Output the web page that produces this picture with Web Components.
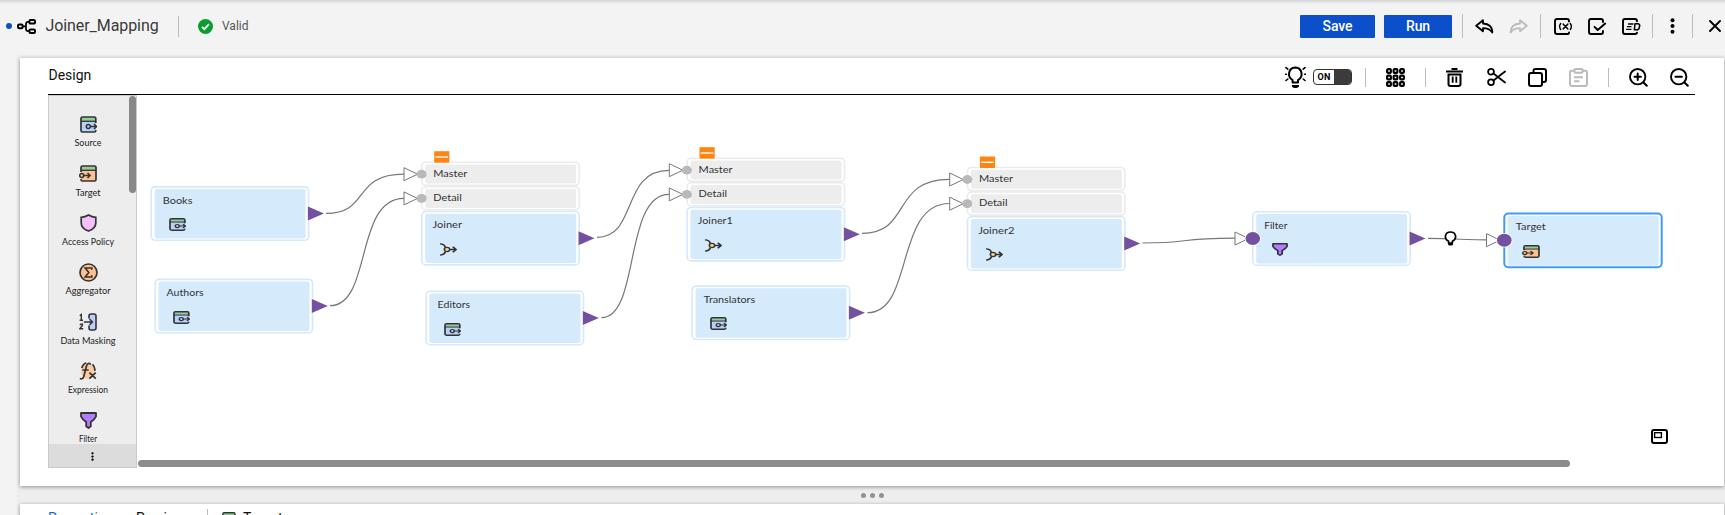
<!DOCTYPE html>
<html lang="en">
<head>
<meta charset="utf-8">
<title>Joiner_Mapping</title>
<style>
html,body{margin:0;height:100%;overflow:hidden;background:#f3f3f3;font-family:Roboto,sans-serif}
</style>
</head>
<body>
<mapping-app></mapping-app>
<script>
const P0 = 'fill="none" stroke="#000" stroke-linecap="round" stroke-linejoin="round"';
const S = P0 + ' stroke-width="2"';
const srcArt = (fill) => `<rect x="1" y="1" width="15" height="15" rx="1.6" fill="${fill}"/><path d="M1.5 1.5h14v3.7h-14z" fill="#8fd09a"/>`;
const ICONS = {
  mapping: [19,15,`<g fill="none" stroke="#000" stroke-width="2"><rect x="1" y="5.6" width="4.6" height="3.6" rx="1.2"/><rect x="12.4" y="1" width="5.6" height="3.6" rx="1.2"/><rect x="12.4" y="10.4" width="5.6" height="3.6" rx="1.2"/><path d="M5.6 7.4h3.2M12.4 2.8h-1.2q-2.2 0-2.2 2.2v5q0 2.2 2.2 2.2h1.2" stroke-width="1.7"/></g>`],
  valid: [15,15,`<circle cx="7.5" cy="7.5" r="7.5" fill="#0a9e2f"/><path d="M4 7.8l2.4 2.4 4.6-5" fill="none" stroke="#fff" stroke-width="1.8"/>`],
  undo: [19,15,`<path d="M8 1.2L1.2 6.8 8 12.2V9.2c4.600 0 7 .6 9.300 4.300C17.600 8 14 4.700 8 4.500z" ${P0} stroke-width="1.800"/>`],
  redo: [19,15,`<path d="M11 1.200l6.800 5.600L11 12.200V9.200c-4.600 0-7 .6-9.300 4.300C1.400 8 5 4.700 11 4.500z" fill="none" stroke="#bbb" stroke-width="1.800" stroke-linejoin="round"/>`],
  params: [19,17,`<path d="M15 3.500V3q0-2-2-2H3Q1 1 1 3v11q0 2 2 2h10q2 0 2-1.600" ${P0} stroke-width="1.900"/><path d="M6.700 5.500q-2.200 3 0 6M16.300 5.500q2.200 3 0 6" ${P0} stroke-width="1.400"/><path d="M9.300 6.200l4.400 4.600M13.700 6.200l-4.400 4.600" ${P0} stroke-width="1.600"/>`],
  check: [19,17,`<path d="M15 4V3q0-2-2-2H3Q1 1 1 3v11q0 2 2 2h10q2 0 2-2v-1M6.500 8.800l3.200 3.200 7.500-6.500" ${P0} stroke-width="1.900"/>`],
  script: [19,17,`<path d="M15 3.300V3q0-2-2-2H3Q1 1 1 3v11q0 2 2 2h10q2 0 2-1.400" ${P0} stroke-width="1.900"/><path d="M6.500 6h4.500M5.500 8.700h3.500M4.500 11.300h4.500" ${P0} stroke-width="1.300"/><path d="M13 5.800h3.500l1.300 1.500-.8 3.300-1.200 1.200h-3.500z" ${P0} stroke-width="1.500"/>`],
  dots: [5,16,`<circle cx="2.500" cy="2.300" r="2"/><circle cx="2.500" cy="8" r="2"/><circle cx="2.500" cy="13.700" r="2"/>`],
  close: [12,12,`<path d="M1 1l10 10M11 1L1 11" ${P0} stroke-width="1.900"/>`],
  bulb: [21,22,`<path d="M7.600 16.500v-2.300C1.700 10.500 3.500 1.600 10.300 1.400c6.800.2 8.600 9.100 2.700 12.800v2.300z" ${P0} stroke-width="2"/><path d="M7 19h7v1.600q-1 1.400-2.500 1.400h-2Q7.500 22 7 20.600z"/><path d="M1 1.600l1.800 1.500M20 1.600l-1.800 1.500M.6 8.300h.8M20.400 8.300h-.8M1 14.500l1.800-1.500M20 14.500l-1.800-1.500" ${P0} stroke-width="1.600"/>`],
  grid: [19,19,[1.100,7.600,14.100].map(y=>[1.100,7.600,14.100].map(x=>`<rect x="${x}" y="${y}" width="3.800" height="3.800" rx="1" fill="none" stroke="#000" stroke-width="2.100"/>`).join('')).join('')],
  trash: [17,19,`<path d="M0 3.400h17M5.500 1h6" fill="none" stroke="#000" stroke-width="2"/><path d="M2.500 6.500V16q0 2 2 2h8q2 0 2-2V6.500z" fill="none" stroke="#000" stroke-width="2"/><path d="M6.700 8.500v6.200M10.300 8.500v6.200" stroke="#000" stroke-width="1.800"/>`],
  cut: [19,18,`<circle cx="4" cy="3.800" r="2.900" ${P0} stroke-width="1.800"/><circle cx="4" cy="14.200" r="2.900" ${P0} stroke-width="1.800"/><path d="M6.500 5.500L18 14.500M6.500 12.500L18 3.500" ${P0} stroke-width="1.800"/>`],
  copy: [19,19,`<rect x="1" y="5" width="13" height="13" rx="2" ${S}/><path d="M5.500 4V3q0-2 2-2H16q2 0 2 2v9q0 2-2 2h-1" ${S}/>`],
  paste: [19,19,`<g fill="none" stroke="#bbb" stroke-width="2"><path d="M5 2.800H3q-2 0-2 2V16q0 2 2 2h13q2 0 2-2V4.800q0-2-2-2h-2"/><rect x="5.500" y="1" width="8" height="3.700" rx="1"/><path d="M5 9.200h9M5 13.200h5.500"/></g>`],
  zin: [19,19,`<circle cx="8.700" cy="8.700" r="7.700" ${P0} stroke-width="1.900"/><path d="M14.500 14.500l3.300 3.300M5.500 8.700h6.400M8.700 5.500v6.400" ${S}/>`],
  zout: [19,19,`<circle cx="8.700" cy="8.700" r="7.700" ${P0} stroke-width="1.900"/><path d="M14.500 14.500l3.300 3.300M5.500 8.700h6.400" ${S}/>`],
  minimap: [17,15,`<rect x="1" y="1" width="15" height="13" rx="2" ${S}/><rect x="3.600" y="3.700" width="6.800" height="4.800" fill="none" stroke="#000" stroke-width="1.400"/>`],
  source: [17,17,`${srcArt('#b9d0fa')}<path d="M1 5.300h15" stroke="#333" stroke-width="1.300"/><path d="M15.800 7V2.500Q15.800 1 14.300 1H2.500Q1 1 1 2.500v12Q1 16 2.500 16h11.800q1.500 0 1.500-1.500V14" fill="none" stroke="#333" stroke-width="1.700"/><circle cx="8.300" cy="10.500" r="2" fill="none" stroke="#333" stroke-width="1.500"/><path d="M10.300 10.500h6M14 8l2.600 2.500L14 13" fill="none" stroke="#333" stroke-width="1.500"/>`],
  target: [18,17,`<g transform="translate(1)">${srcArt('#fbc193')}<path d="M1 5.300h15" stroke="#333" stroke-width="1.300"/><path d="M1 7V2.500Q1 1 2.500 1h12Q16 1 16 2.500v12q0 1.500-1.500 1.500h-12Q1 16 1 14.500V14" fill="none" stroke="#333" stroke-width="1.700"/><circle cx="1.700" cy="10.500" r="2" fill="#fbc193" stroke="#333" stroke-width="1.500"/><path d="M3.700 10.500h6.300M7.500 8l2.600 2.500L7.500 13" fill="none" stroke="#333" stroke-width="1.500"/></g>`],
  policy: [17,18,`<path d="M8.500 1Q5 3.300 1.200 3.300V9q0 5.500 7.300 8 7.300-2.500 7.300-8V3.300Q12 3.300 8.500 1z" fill="#f3c0fb" stroke="#333" stroke-width="1.700"/>`],
  aggregator: [19,19,`<circle cx="9.500" cy="9.500" r="8.500" fill="#fbc193" stroke="#333" stroke-width="1.700"/><path d="M12.800 6.800V5H6.200l3.600 4.500L6.200 14h6.600v-1.800" fill="none" stroke="#333" stroke-width="1.600"/>`],
  masking: [18,18,`<path d="M10 5.500V3q0-2 2-2h3q2 0 2 2v12q0 2-2 2h-3q-2 0-2-2v-2.500" fill="#b9d0fa" stroke="#333" stroke-width="1.600"/><path d="M4.800 9H13M10.500 6l3 3-3 3M.8 2.700L2.300 1.500v5.700M.6 7.200h3.400M.8 11.800q3-2 2.700.4L.8 15.800h3.400" fill="none" stroke="#333" stroke-width="1.400"/>`],
  expression: [18,18,`<ellipse cx="9" cy="9" rx="7" ry="7.800" fill="#fbc9a4"/><path d="M11.800 2.500Q9-.2 7.500 4L4.800 14.500q-1 3.200-4 2M3.300 8h6.400M2.800 6q1.400-4.500 4.500-5M13.500 2.300q2.800 2.500 2.300 6.500M10.400 10.700l6.400 6M16.800 10.700l-6.400 6" fill="none" stroke="#333" stroke-width="1.700"/>`],
  filter: [17,17,`<path d="M1 1h15v3.500Q15 7 10.800 10v4.300L8.500 16l-2.300-1.700V10Q2 7 1 4.500z" fill="#b27cff" stroke="#333" stroke-width="1.800" stroke-linejoin="round"/>`],
  joiner: [18,17,`<path d="M1 1.200q4.300 0 5.600 5M1 15.800q4.300 0 5.600-5M10.500 8.500H17M13.800 4.800l3.300 3.700-3.300 3.700" fill="none" stroke="#333" stroke-width="1.800"/><circle cx="8" cy="8.500" r="2.700" fill="#fbd07a" stroke="#333" stroke-width="1.500"/>`],
  bulbSmall: [13,15,`<path d="M4.600 10.300C-.6 7.500.9 1 6.500 1s7.100 6.500 1.900 9.300V12H4.600z" fill="#fff" stroke="#000" stroke-width="1.700" stroke-linejoin="round"/><path d="M4 12h5v1.500q-.5 1.100-1.500 1.100h-2Q4.500 14.600 4 13.500z"/>`]
};

class UiIcon extends HTMLElement {
  constructor(){ super(); this.attachShadow({mode:'open'}); }
  connectedCallback(){
    const [w,h,art] = ICONS[this.getAttribute('name')];
    const W = this.getAttribute('w') || w, H = this.getAttribute('h') || h;
    this.shadowRoot.innerHTML = `<style>:host{display:block;flex:none;width:${W}px;height:${H}px}svg{display:block}</style>
      <svg width="${W}" height="${H}" viewBox="0 0 ${w} ${h}" preserveAspectRatio="none">${art}</svg>`;
  }
}
customElements.define('ui-icon', UiIcon);

class UiRule extends HTMLElement {
  constructor(){ super(); this.attachShadow({mode:'open'}).innerHTML =
    `<style>:host{display:block;flex:none;width:1px;height:var(--rule,24px);background:#bdbdbd}</style>`; }
}
customElements.define('ui-rule', UiRule);

class UiButton extends HTMLElement {
  constructor(){ super(); this.attachShadow({mode:'open'}).innerHTML =
    `<style>:host{display:flex;flex:none;align-items:center;justify-content:center;height:23px;background:#0b4fcb;color:#fff;font:500 14px Roboto,sans-serif;letter-spacing:-.1px;border-radius:1px}</style><slot></slot>`; }
}
customElements.define('ui-button', UiButton);

class UiSwitch extends HTMLElement {
  constructor(){ super(); this.attachShadow({mode:'open'}).innerHTML =
    `<style>:host{display:flex;flex:none;box-sizing:border-box;width:39px;height:16px;border:1px solid #333;border-radius:4px;overflow:hidden;background:#fff;color:#000}
     span{width:20px;text-align:center;font:700 9px/14px Roboto,sans-serif;letter-spacing:.3px}i{flex:1;background:#3b3b3b}</style><span><slot></slot></span><i></i>`; }
}
customElements.define('ui-switch', UiSwitch);

class PageHeader extends HTMLElement {
  constructor(){ super(); this.attachShadow({mode:'open'}).innerHTML = `
  <style>
  :host{display:flex;align-items:center;height:52px;box-sizing:border-box;padding-left:6px;flex:none;background:linear-gradient(#d6d6d6,#e2e2e2 2px,#f3f3f3 4px)}
  :host>*{flex:none}
  .dot{width:6px;height:6px;border-radius:3px;background:#0b4fcb;margin-right:5px}
  h1{margin:0 0 0 9.500px;width:132.500px;font:400 16px/20px Roboto,sans-serif;letter-spacing:-.08px;color:#3a3a3a}
  .st{font:400 12px/16px Roboto,sans-serif;color:#555;margin-left:9px;width:1078px}
  </style>
  <span class="dot"></span><ui-icon name="mapping"></ui-icon><h1>Joiner_Mapping</h1>
  <ui-rule style="--rule:21px"></ui-rule><ui-icon name="valid" style="margin-left:19px"></ui-icon><span class="st">Valid</span>
  <ui-button style="width:75px">Save</ui-button><ui-button style="width:68px;margin-left:9px">Run</ui-button>
  <ui-rule style="margin-left:10px"></ui-rule>
  <ui-icon name="undo" style="margin-left:12px"></ui-icon><ui-icon name="redo" style="margin-left:15px"></ui-icon>
  <ui-rule style="margin-left:12px"></ui-rule>
  <ui-icon name="params" style="margin-left:13px"></ui-icon><ui-icon name="check" style="margin-left:15px"></ui-icon><ui-icon name="script" style="margin-left:15px"></ui-icon>
  <ui-rule style="margin-left:11px"></ui-rule><ui-icon name="dots" style="margin-left:17px"></ui-icon>
  <ui-rule style="margin-left:17px"></ui-rule><ui-icon name="close" style="margin-left:16px"></ui-icon>`; }
}
customElements.define('page-header', PageHeader);

class DesignBar extends HTMLElement {
  constructor(){ super(); this.attachShadow({mode:'open'}).innerHTML = `
  <style>:host{display:flex;align-items:center;flex:none;height:36px;margin:0 29px 0 28px;border-bottom:1px solid #000;--rule:19px}
  h2{margin:0 0 3px;padding-left:.5px;width:1236.500px;flex:none;font:400 14px/18px Roboto,sans-serif;color:#111}
  ui-icon,ui-rule,ui-switch{margin-top:2px}</style>
  <h2>Design</h2><ui-icon name="bulb" style="margin-top:1px"></ui-icon><ui-switch style="margin-left:7px">ON</ui-switch>
  <ui-rule style="margin-left:13px"></ui-rule><ui-icon name="grid" style="margin-left:20px"></ui-icon>
  <ui-rule style="margin-left:20px"></ui-rule><ui-icon name="trash" style="margin-left:20px"></ui-icon>
  <ui-icon name="cut" style="margin-left:24px"></ui-icon><ui-icon name="copy" style="margin-left:22px"></ui-icon><ui-icon name="paste" style="margin-left:22px"></ui-icon>
  <ui-rule style="margin-left:20px"></ui-rule><ui-icon name="zin" style="margin-left:20px"></ui-icon><ui-icon name="zout" style="margin-left:22px"></ui-icon>`; }
}
customElements.define('design-bar', DesignBar);

class PaletteItem extends HTMLElement {
  constructor(){ super(); this.attachShadow({mode:'open'}); }
  connectedCallback(){
    const w = +this.getAttribute('width');
    this.shadowRoot.innerHTML = `<style>:host{display:flex;flex-direction:column;align-items:center;height:49.300px;flex:none}
    .i{height:18px;display:flex;align-items:center}svg{display:block;margin-top:2px}text{font:400 9.300px Lato,sans-serif;fill:#222}</style>
    <div class="i"><ui-icon name="${this.getAttribute('icon')}"></ui-icon></div>
    <svg width="78" height="15"><text x="${39-w/2}" y="10.500" textLength="${w}" lengthAdjust="spacingAndGlyphs">${this.getAttribute('label')}</text></svg>`;
  }
}
customElements.define('palette-item', PaletteItem);

class ToolPalette extends HTMLElement {
  constructor(){ super(); this.attachShadow({mode:'open'}).innerHTML = `
  <style>:host{display:flex;flex-direction:column;flex:none;box-sizing:border-box;width:89px;height:373px;border:1px solid #c9c9c9;background:#ededed}
  .list{display:flex;height:348px;overflow:hidden}.items{width:78px;padding:19.400px 2px 0 0;height:328px}
  .thumb{width:7px;height:97px;border-radius:4px;background:#888}
  .more{flex:1;background:#dcdcdc;display:flex;align-items:center;justify-content:center;padding-top:2px}</style>
  <div class="list"><div class="items">
  <palette-item icon="source" label="Source" width="27"></palette-item>
  <palette-item icon="target" label="Target" width="25"></palette-item>
  <palette-item icon="policy" label="Access Policy" width="52"></palette-item>
  <palette-item icon="aggregator" label="Aggregator" width="45"></palette-item>
  <palette-item icon="masking" label="Data Masking" width="55"></palette-item>
  <palette-item icon="expression" label="Expression" width="40"></palette-item>
  <palette-item icon="filter" label="Filter" width="18"></palette-item>
  </div><div class="thumb"></div></div>
  <div class="more"><ui-icon name="dots" w="3" h="9"></ui-icon></div>`; }
}
customElements.define('tool-palette', ToolPalette);

/* A transformation node; (x, y) is the top-left corner of its blue box in page pixels. */
class FlowNode extends HTMLElement {
  constructor(){ super(); this.attachShadow({mode:'open'}); }
  connectedCallback(){
    const a = n => this.getAttribute(n), x = +a('x'), y = +a('y'), icon = a('icon'), sel = this.hasAttribute('selected');
    const join = icon === 'joiner', input = this.hasAttribute('input');
    const P = 20, T = 62, fx = x - Math.floor(x), fy = y - Math.floor(y);
    const box = (y,h,line,fill,sw=1.6) => `<rect x=".8" y="${y+.8}" width="157.400" height="${h-1.6}" rx="4" fill="#fff" stroke="${line}" stroke-width="${sw}"/><rect x="4.200" y="${y+3}" width="151" height="${h-5.600}" rx="2" fill="${fill}"/>`;
    const port = (cy,label,w) => `<path d="M-17 ${cy-6.500}v13l13.500-6.500z" fill="#fff" stroke="#777" stroke-width="1"/><ellipse cx=".6" cy="${cy}" rx="5" ry="4.400" fill="#b9b9b9"/><text x="12.300" y="${cy+2.500}" textLength="${w}" lengthAdjust="spacingAndGlyphs">${label}</text>`;
    let s = '';
    if (join) s += box(-49.300,24.700,'#ebebeb','#ededed') + box(-24.800,24.700,'#ebebeb','#ededed');
    s += box(0,sel?55.300:55, sel?'#3d9bfb':'#d3e9fc','#d5eafb', sel?2:1.600);
    if (join) s += port(-36.500,'Master',34) + port(-12.300,'Detail',28.500)
      + `<path d="M12.200-60.500h17.200v13H12.200z" fill="#fff"/><path d="M13.200-59.500h15.200v11.500H13.200z" fill="#ff8412"/><path d="M14.500-53.700h12.600" stroke="#fff" stroke-width="1.400"/>`;
    if (input) s += `<path d="M-17 21v13l13.500-6.500z" fill="#fff" stroke="#777"/><ellipse cx=".8" cy="27.500" rx="8.200" ry="7.200" fill="#fff"/><ellipse cx=".8" cy="27.500" rx="7.300" ry="6.500" fill="#7350a0"/>`;
    if (!sel) s += `<path d="M157 20v15.200l17.300-7.600z" fill="#fff"/><path d="M157.500 20.500v14l16-7z" fill="#7350a0"/>`;
    s += `<text x="${join?11.500:12.300}" y="17.700" textLength="${a('w')}" lengthAdjust="spacingAndGlyphs">${a('label')}</text>`;
    this.shadowRoot.innerHTML = `<style>:host{display:block;position:absolute;left:${Math.floor(x)-137-P}px;top:${Math.floor(y)-95-T}px;width:200px;height:120px}
    svg{display:block}text{font:400 8.800px Lato,sans-serif;fill:#333}ui-icon{position:absolute;left:${P+fx+(icon==='filter'?20:join?17.800:18.500)}px;top:${T+fy+32}px}</style>
    <svg width="200" height="120" viewBox="${-P-fx} ${-T-fy} 200 120">${s}</svg><ui-icon name="${icon}" w="${icon==='filter'?16:icon==='source'?17:18}" h="13"></ui-icon>`;
  }
}
customElements.define('flow-node', FlowNode);

class FlowCanvas extends HTMLElement {
  constructor(){ super();
    const links = [[326,213.300,404,174.200],[330,305.700,404,198.400],[597,237.300,669,170.300],[601.500,317.700,669,194.400],[862,233.300,949.500,179.300],[867.500,312.700,949.500,203.500],[1142.500,243,1235,238.200],[1428,238.300,1486,239.800]];
    const d = links.map(([x,y,X,Y]) => `M${x} ${y}C${x+(X-x)*.57} ${y} ${x+(X-x)*.33} ${Y} ${X} ${Y}`).join('');
    this.attachShadow({mode:'open'}).innerHTML = `
  <style>:host{display:flex;flex-direction:column;justify-content:flex-end;position:relative;flex:1;height:373px;overflow:hidden}
  .wires{position:absolute;left:0;top:0}
  .bar{width:1432px;height:7px;border-radius:4px;background:#8c8c8c;margin:0 0 1px 1px}
  .mini{position:absolute;left:1514px;top:334px}.hint{position:absolute;left:1307px;top:136px}</style>
  <svg class="wires" width="1587" height="373" viewBox="137 95 1587 373"><path d="${d}" fill="none" stroke="#777" stroke-width="1.200"/></svg>
  <flow-node x="150.400" y="186.100" icon="source" label="Books" w="29.700"></flow-node>
  <flow-node x="154.300" y="278.600" icon="source" label="Authors" w="37"></flow-node>
  <flow-node x="421" y="210.700" icon="joiner" label="Joiner" w="29.500"></flow-node>
  <flow-node x="425.300" y="290.500" icon="source" label="Editors" w="32.500"></flow-node>
  <flow-node x="686.300" y="206.700" icon="joiner" label="Joiner1" w="35"></flow-node>
  <flow-node x="691.400" y="285.300" icon="source" label="Translators" w="51.500"></flow-node>
  <flow-node x="966.700" y="216" icon="joiner" label="Joiner2" w="36.300"></flow-node>
  <flow-node x="1252" y="211" icon="filter" label="Filter" w="23" input></flow-node>
  <flow-node x="1503.500" y="212.700" icon="target" label="Target" w="30" input selected></flow-node>
  <ui-icon class="hint" name="bulbSmall"></ui-icon><ui-icon class="mini" name="minimap"></ui-icon><div class="bar"></div>`; }
}
customElements.define('flow-canvas', FlowCanvas);

class ResizeGrip extends HTMLElement {
  constructor(){ super(); this.attachShadow({mode:'open'}).innerHTML =
    `<style>:host{display:flex;flex:none;height:17px;padding-top:1px;justify-content:center;align-items:center;gap:3.500px;padding-left:1px}i{width:5.400px;height:5.400px;border-radius:50%;background:#929292}</style><i></i><i></i><i></i>`; }
}
customElements.define('resize-grip', ResizeGrip);

class DetailTabs extends HTMLElement {
  constructor(){ super(); this.attachShadow({mode:'open'}).innerHTML = `
  <style>:host{display:flex;align-items:flex-start;padding:5px 0 0 28px;height:40px;font:400 14px/16px Roboto,sans-serif;color:#111}
  span{margin-top:1px}.a{color:#1a66dc;width:88px}.p{width:71px}ui-icon{margin:3px 7px 0 14px}</style>
  <span class="a">Properties</span><span class="p">Preview</span><ui-rule></ui-rule><ui-icon name="source" w="14" h="14"></ui-icon><span>Target</span>`; }
}
customElements.define('detail-tabs', DetailTabs);

class MappingApp extends HTMLElement {
  constructor(){ super(); this.attachShadow({mode:'open'}).innerHTML = `
  <style>:host{display:flex;flex-direction:column;height:515px;overflow:hidden;background:#f3f3f3}
  main{flex:1;display:flex;flex-direction:column;margin:3px 0 0 17px;padding:3px 1px 0 3px;background:#eee;min-height:0}
  section{background:#fff;box-shadow:0 1px 4px rgba(0,0,0,.4);flex:none}
  .d{height:428px;display:flex;flex-direction:column}.b{height:50px}
  .work{display:flex;padding-left:28px}</style>
  <page-header></page-header>
  <main><section class="d"><design-bar></design-bar><div class="work"><tool-palette></tool-palette><flow-canvas></flow-canvas></div></section>
  <resize-grip></resize-grip><section class="b"><detail-tabs></detail-tabs></section></main>`; }
}
customElements.define('mapping-app', MappingApp);
</script>
</body>
</html>
